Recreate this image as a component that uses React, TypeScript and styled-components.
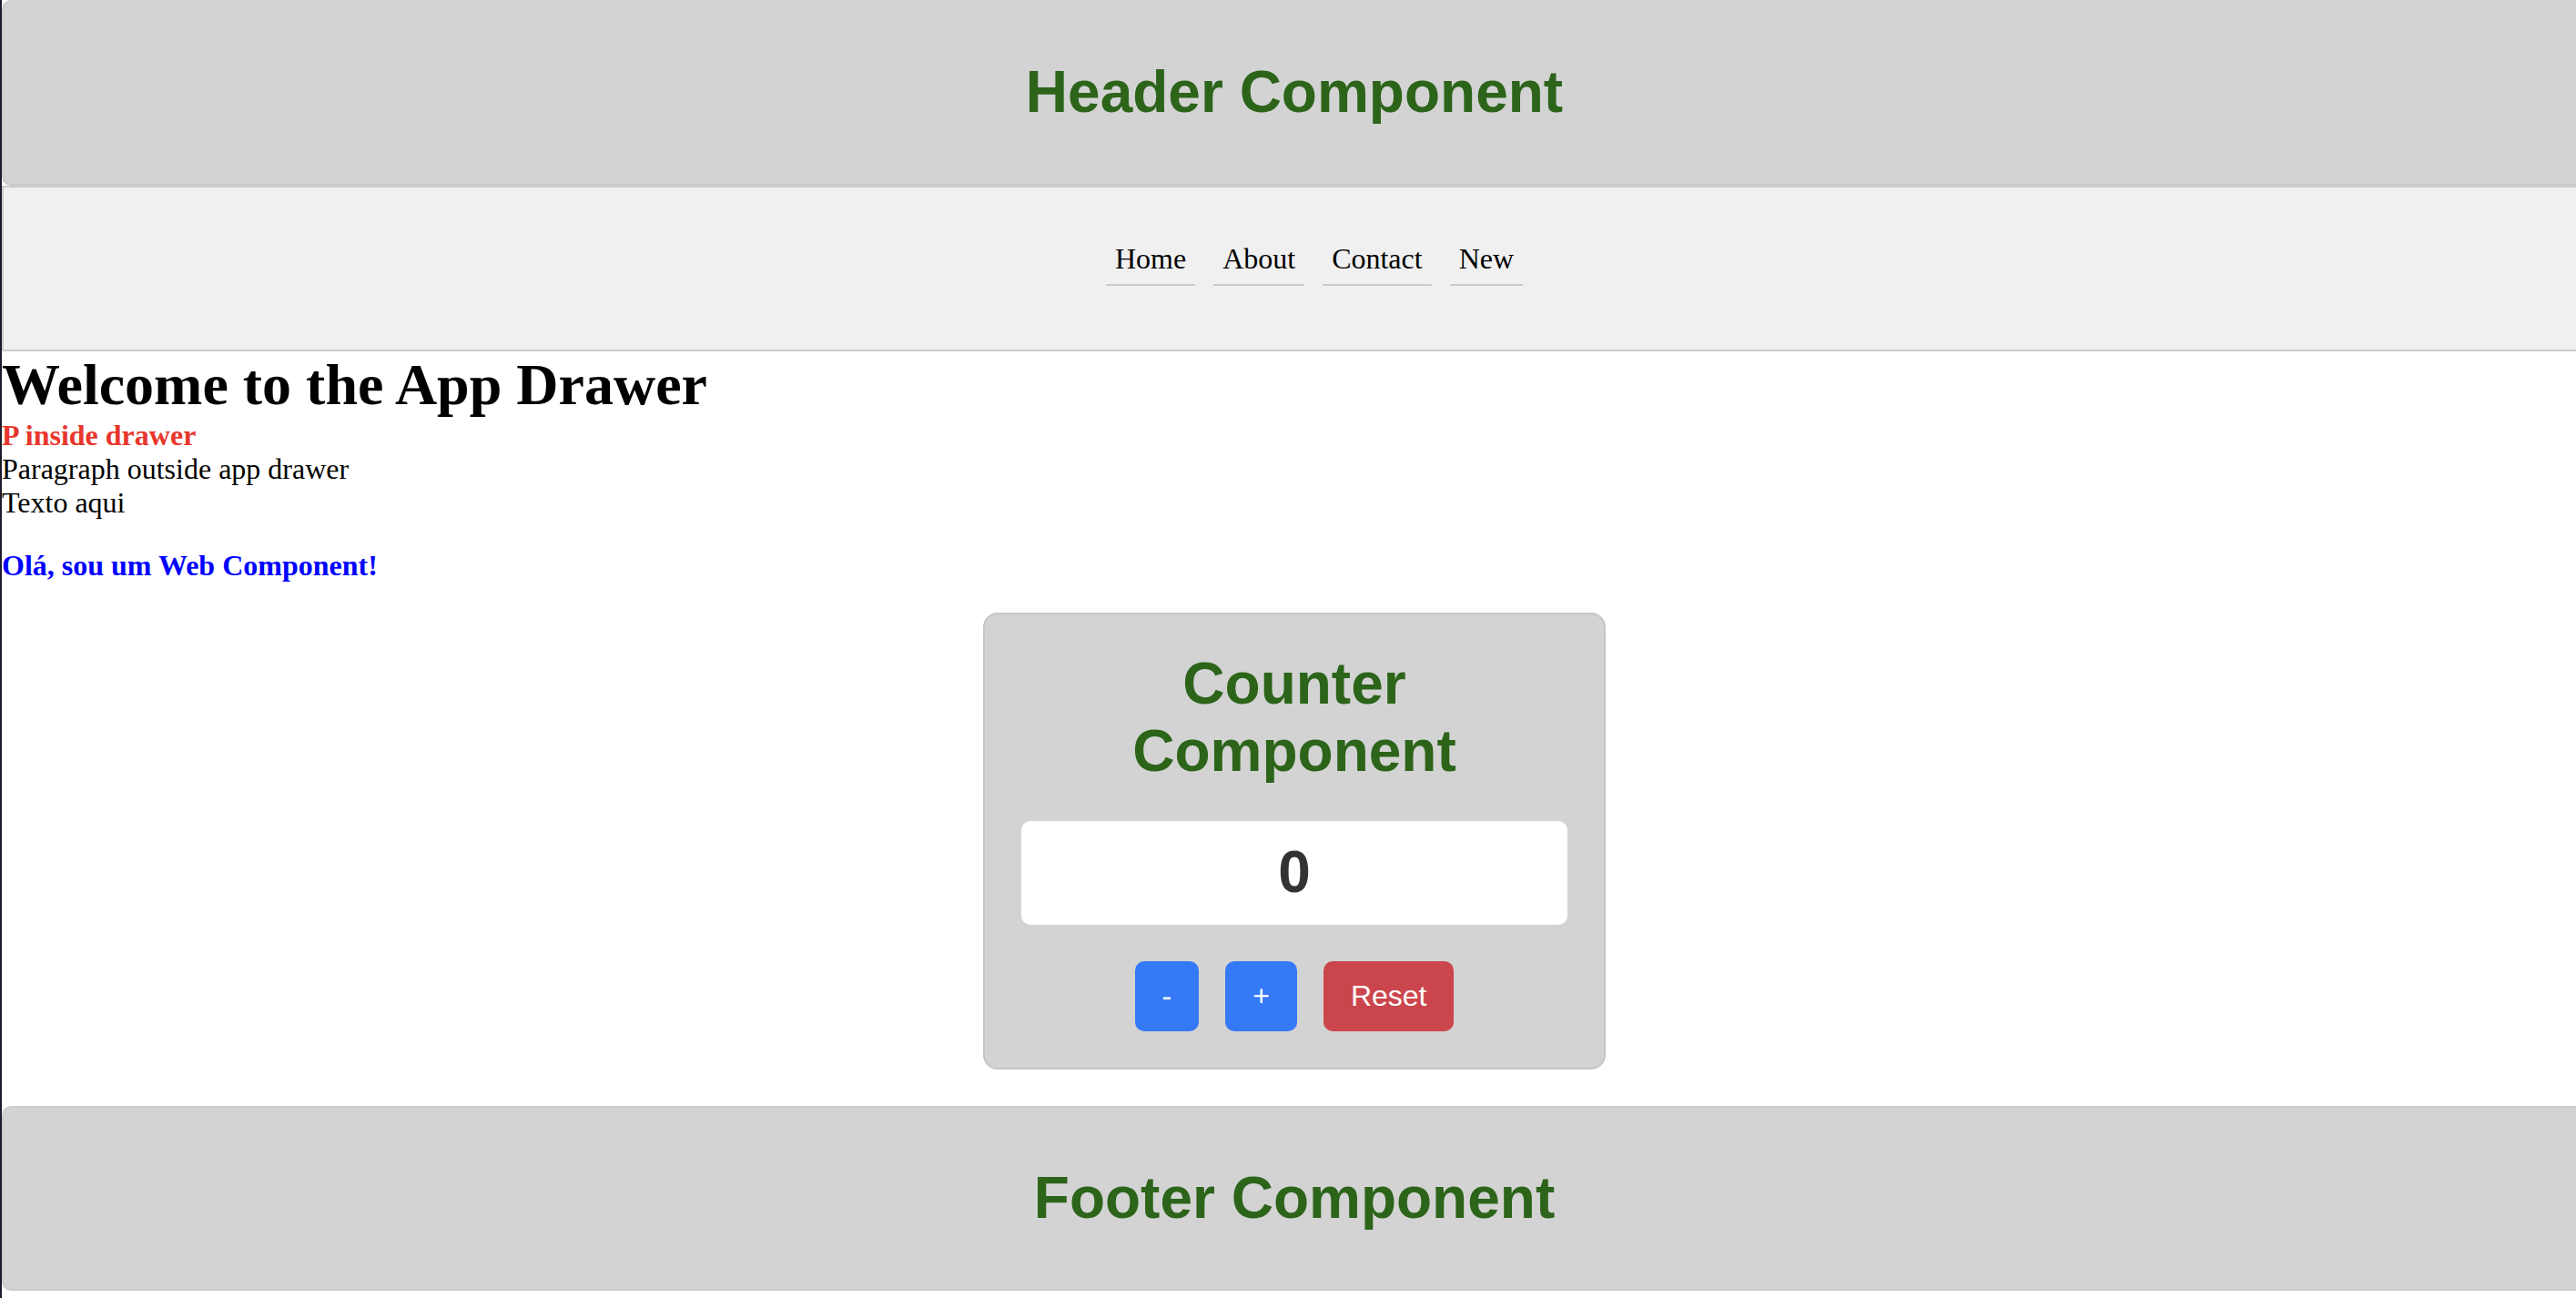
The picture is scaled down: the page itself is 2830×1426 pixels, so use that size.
import React, { useState } from "react";
import styled, { createGlobalStyle } from "styled-components";

const GlobalStyle = createGlobalStyle`
  html, body {
    margin: 0;
    padding: 0;
    background: #ffffff;
    overflow-x: hidden;
  }
  body {
    font-family: "Liberation Serif", "Times New Roman", serif;
    font-size: 32px;
    color: #000;
  }
`;

const GREEN = "#2c641a";

const Page = styled.div`
  border-left: 2px solid #1c1b2d;
  margin-right: -12px;
  min-height: 1426px;
  box-sizing: border-box;
`;

const Banner = styled.header`
  background: #d3d3d3;
  border: 2px solid #cbcbcb;
  border-radius: 10px;
  padding: 20px;
  text-align: center;
`;

const TopBanner = styled(Banner)`
  border-top: none;
  padding-top: 22px;
`;

const BannerTitle = styled.h1`
  margin: 43px 0;
  font-family: "Liberation Sans", Arial, sans-serif;
  font-size: 64px;
  line-height: 73.6px;
  font-weight: 700;
  color: ${GREEN};
`;

const Nav = styled.nav`
  background: #f0f0f0;
  border: 2px solid #cbcbcb;
  padding: 50px 0 70px 44px;
  display: flex;
  justify-content: center;
  gap: 20px;
`;

const NavLink = styled.a`
  display: block;
  padding: 10px;
  border-bottom: 2px solid #cbcbcb;
  font-family: "Liberation Serif", "Times New Roman", serif;
  font-size: 32px;
  line-height: 36.8px;
  color: #000;
  text-decoration: none;
`;

const Heading = styled.h1`
  margin: 0;
  font-family: "Liberation Serif", "Times New Roman", serif;
  font-size: 64px;
  line-height: 73.6px;
  font-weight: 700;
`;

const Line = styled.p<{ $color?: string; $bold?: boolean; $spaced?: boolean }>`
  margin: ${(p) => (p.$spaced ? "33px 0" : "0")};
  font-size: 32px;
  line-height: 36.8px;
  font-weight: ${(p) => (p.$bold ? 700 : 400)};
  color: ${(p) => p.$color ?? "#000"};
`;

const CardRow = styled.div`
  display: flex;
  justify-content: center;
`;

const Card = styled.section`
  width: 600px;
  padding: 40px;
  background: #d3d3d3;
  border: 2px solid #c6c6c6;
  border-radius: 16px;
  font-family: "Liberation Sans", Arial, sans-serif;
`;

const CardTitle = styled.h2`
  margin: 0 0 40px;
  font-size: 64px;
  line-height: 73.6px;
  font-weight: 700;
  text-align: center;
  color: ${GREEN};
`;

const Display = styled.div`
  background: #ffffff;
  border-radius: 10px;
  padding: 20px;
  margin-bottom: 40px;
  text-align: center;
  font-size: 64px;
  line-height: 73.6px;
  font-weight: 700;
  color: #333333;
`;

const Buttons = styled.div`
  display: flex;
  justify-content: center;
  gap: 29px;
`;

const Btn = styled.button<{ $variant: "primary" | "danger" }>`
  border: none;
  border-radius: 10px;
  padding: 20px 30px;
  font-family: "Liberation Sans", Arial, sans-serif;
  font-size: 32px;
  line-height: 36.8px;
  color: #ffffff;
  cursor: pointer;
  background: ${(p) => (p.$variant === "danger" ? "#cb464c" : "#3579f6")};
`;

const Footer = styled(Banner).attrs({ as: "footer" })`
  margin-top: 40px;
`;

export default function App() {
  const [count, setCount] = useState(0);
  return (
    <>
      <GlobalStyle />
      <Page>
        <TopBanner>
          <BannerTitle>Header Component</BannerTitle>
        </TopBanner>
        <Nav>
          <NavLink href="#">Home</NavLink>
          <NavLink href="#">About</NavLink>
          <NavLink href="#">Contact</NavLink>
          <NavLink href="#">New</NavLink>
        </Nav>
        <Heading>Welcome to the App Drawer</Heading>
        <Line $bold $color="#e8362c">P inside drawer</Line>
        <Line>Paragraph outside app drawer</Line>
        <Line>Texto aqui</Line>
        <Line $bold $spaced $color="#0000ff">Olá, sou um Web Component!</Line>
        <CardRow>
          <Card>
            <CardTitle>Counter Component</CardTitle>
            <Display>{count}</Display>
            <Buttons>
              <Btn $variant="primary" onClick={() => setCount(count - 1)}>-</Btn>
              <Btn $variant="primary" onClick={() => setCount(count + 1)}>+</Btn>
              <Btn $variant="danger" onClick={() => setCount(0)}>Reset</Btn>
            </Buttons>
          </Card>
        </CardRow>
        <Footer>
          <BannerTitle>Footer Component</BannerTitle>
        </Footer>
      </Page>
    </>
  );
}
